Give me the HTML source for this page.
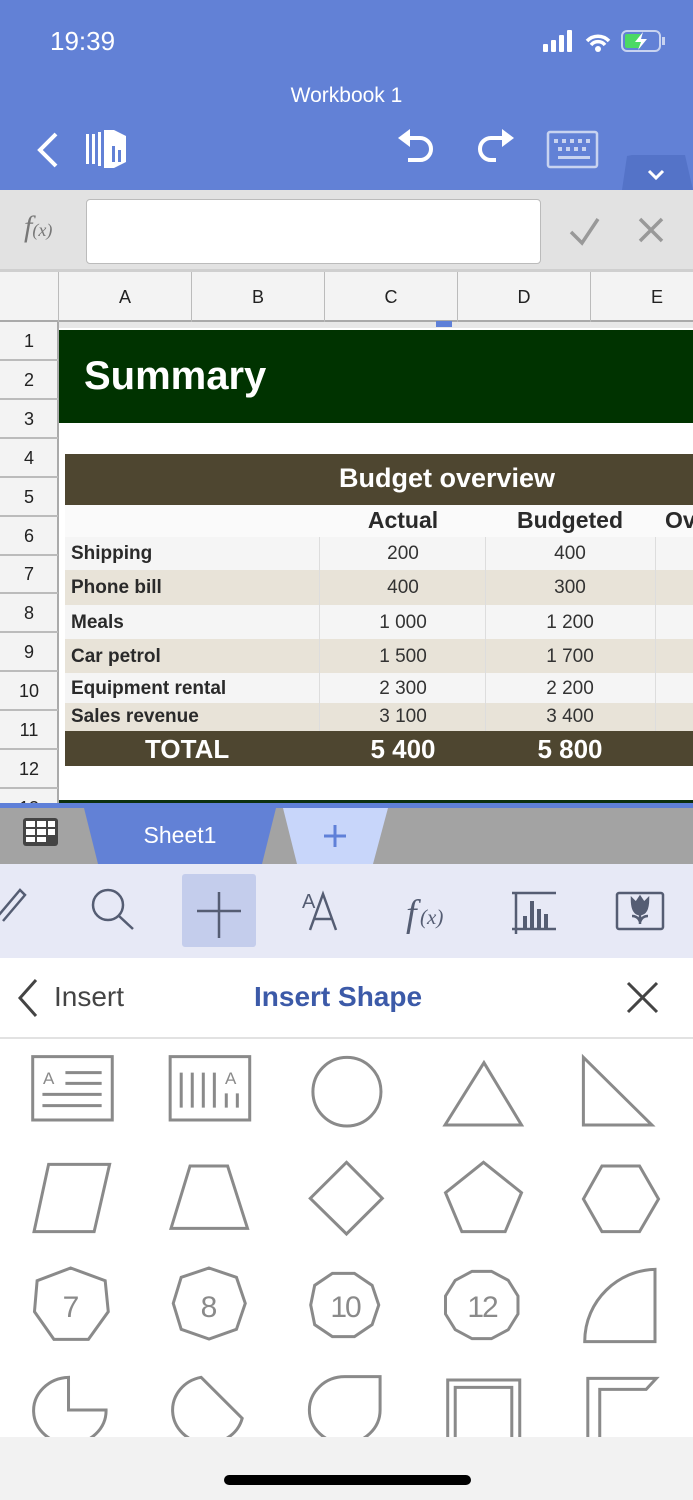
<!DOCTYPE html>
<html><head><meta charset="utf-8"><style>
*{margin:0;padding:0;box-sizing:border-box}
body{width:693px;height:1500px;position:relative;overflow:hidden;background:#fff;font-family:"Liberation Sans",sans-serif}
.a{position:absolute}
.rn{position:absolute;left:0;width:58px;text-align:center;font-size:18px;color:#222}
.ch{position:absolute;top:272px;height:50px;line-height:50px;text-align:center;font-size:18px;color:#222;border-right:1px solid #bbb}
.lb{position:absolute;left:71px;font-size:19px;font-weight:bold;color:#2a2a2a}
.n{position:absolute;width:120px;text-align:center;font-size:19px;color:#333}
</style></head><body>
<div class="a" style="left:0;top:0;width:693px;height:190px;background:#6281d6"></div>
<div class="a" style="left:50px;top:26px;font-size:26px;color:#fff">19:39</div>
<svg class="a" style="left:540px;top:28px" width="130" height="30">
<rect x="3" y="16" width="5" height="8" rx="1" fill="#fff"/><rect x="11" y="12" width="5" height="12" rx="1" fill="#fff"/><rect x="19" y="7" width="5" height="17" rx="1" fill="#fff"/><rect x="27" y="2" width="5" height="22" rx="1" fill="#fff"/>
<path d="M47 13 a15 15 0 0 1 22 0 M51 17 a9 9 0 0 1 14 0" stroke="#fff" stroke-width="3.5" fill="none"/><circle cx="58" cy="21" r="3" fill="#fff"/>
<rect x="82" y="3" width="38" height="20" rx="5" fill="none" stroke="#c8d3f0" stroke-width="2"/><rect x="85" y="6" width="16" height="14" rx="2" fill="#4cd964"/><rect x="122" y="9" width="3" height="8" fill="#c8d3f0"/>
<path d="M103 4 L95 14 L101 14 L98 22 L107 11 L101 11 Z" fill="#fff"/>
</svg>
<div class="a" style="left:0;width:693px;top:84px;text-align:center;font-size:21px;color:#fff">Workbook 1</div>
<svg class="a" style="left:0;top:120px" width="693" height="70">
<path d="M56 14 L40 30 L56 46" stroke="#fff" stroke-width="4" fill="none"/>
<g fill="#fff"><rect x="86" y="14" width="3" height="30"/><rect x="92" y="14" width="3" height="30"/><rect x="98" y="12" width="3" height="34"/><path d="M104 10 L114 10 L126 16 L126 42 L114 48 L104 48 Z"/></g>
<g fill="#6281d6"><rect x="112" y="26" width="3" height="16"/><rect x="118" y="30" width="3" height="12"/></g>
<path d="M406 18 L420 18 A11 11 0 0 1 420 40 L408 40" stroke="#fff" stroke-width="4" fill="none"/><path d="M398 18 L410 9 L410 27 Z" fill="#fff"/>
<path d="M505 18 L491 18 A11 11 0 0 0 491 40 L496 40" stroke="#fff" stroke-width="4" fill="none"/><path d="M514 18 L502 9 L502 27 Z" fill="#fff"/>
<rect x="548" y="12" width="49" height="35" rx="2" fill="none" stroke="#c8d3f0" stroke-width="2.5"/>
<g fill="#c8d3f0"><rect x="554" y="19" width="4" height="4"/><rect x="562" y="19" width="4" height="4"/><rect x="570" y="19" width="4" height="4"/><rect x="578" y="19" width="4" height="4"/><rect x="586" y="19" width="4" height="4"/><rect x="558" y="27" width="4" height="4"/><rect x="566" y="27" width="4" height="4"/><rect x="574" y="27" width="4" height="4"/><rect x="582" y="27" width="4" height="4"/><rect x="558" y="36" width="32" height="3"/></g>
<path d="M627 36 L632 35 L685 35 L693 70 L622 70 Z" fill="#5473c8"/>
<path d="M649 51 L656 58 L663 51" stroke="#fff" stroke-width="3" fill="none"/>
</svg>
<div class="a" style="left:0;top:190px;width:693px;height:82px;background:#e2e2e2;border-bottom:3px solid #cfcfcf"></div>
<div class="a" style="left:24px;top:210px;font-family:'Liberation Serif',serif;font-style:italic;font-size:30px;color:#777">f<span style="font-size:18px">(x)</span></div>
<div class="a" style="left:86px;top:199px;width:455px;height:65px;background:#fff;border:1px solid #bbb;border-radius:4px"></div>
<svg class="a" style="left:560px;top:210px" width="120" height="40"><path d="M11 22 L22 33 L38 9" stroke="#999" stroke-width="3.5" fill="none"/><path d="M80 9 L102 31 M102 9 L80 31" stroke="#999" stroke-width="3.5"/></svg>
<div class="a" style="left:0;top:272px;width:693px;height:50px;background:#f3f3f3;border-bottom:2px solid #aaa"></div>
<div class="ch" style="left:0;width:59px"></div>
<div class="ch" style="left:59px;width:133px">A</div>
<div class="ch" style="left:192px;width:133px">B</div>
<div class="ch" style="left:325px;width:133px">C</div>
<div class="ch" style="left:458px;width:133px">D</div>
<div class="ch" style="left:591px;width:133px">E</div>
<div class="a" style="left:0;top:322px;width:59px;height:486px;background:#f3f3f3;border-right:2px solid #aaa"></div>
<div class="a" style="left:59px;top:322px;width:634px;height:486px;background:#fff"></div>
<div class="a" style="left:59px;top:322px;width:634px;height:6px;background:#e8e8e8"></div>
<div class="a" style="left:436px;top:321px;width:16px;height:6px;background:#5f80d8"></div>
<div id="rows"></div>
<div class="a" style="left:59px;top:330px;width:634px;height:93px;background:#003300"></div>
<div class="a" style="left:84px;top:354px;font-size:40px;font-weight:bold;color:#fff">Summary</div>
<div class="a" style="left:65px;top:454px;width:628px;height:51px;background:#4e4630"></div>
<div class="a" style="left:65px;top:463px;width:764px;text-align:center;font-size:27px;font-weight:bold;color:#fff">Budget overview</div>
<div class="a" style="left:65px;top:505px;width:628px;height:32px;background:#fafafa"></div>
<div class="a" style="left:65px;top:537px;width:628px;height:33px;background:#f5f5f5"></div>
<div class="a" style="left:65px;top:570px;width:628px;height:35px;background:#e8e3d8"></div>
<div class="a" style="left:65px;top:605px;width:628px;height:34px;background:#f5f5f5"></div>
<div class="a" style="left:65px;top:639px;width:628px;height:34px;background:#e8e3d8"></div>
<div class="a" style="left:65px;top:673px;width:628px;height:30px;background:#f5f5f5"></div>
<div class="a" style="left:65px;top:703px;width:628px;height:28px;background:#e8e3d8"></div>
<div class="a" style="left:65px;top:731px;width:628px;height:35px;background:#4e4630"></div>
<div class="a" style="left:319px;top:537px;width:1px;height:194px;background:#ddd"></div>
<div class="a" style="left:485px;top:537px;width:1px;height:194px;background:#ddd"></div>
<div class="a" style="left:655px;top:537px;width:1px;height:194px;background:#ddd"></div>
<div class="n" style="left:343px;top:507px;font-size:23px;font-weight:bold;color:#2a2a2a">Actual</div>
<div class="n" style="left:510px;top:507px;font-size:23px;font-weight:bold;color:#2a2a2a">Budgeted</div>
<div class="a" style="left:665px;top:507px;font-size:23px;font-weight:bold;color:#2a2a2a">Ov</div>
<div class="lb" style="top:543px">Shipping</div><div class="n" style="left:343px;top:543px">200</div><div class="n" style="left:510px;top:543px">400</div>
<div class="lb" style="top:577px">Phone bill</div><div class="n" style="left:343px;top:577px">400</div><div class="n" style="left:510px;top:577px">300</div>
<div class="lb" style="top:612px">Meals</div><div class="n" style="left:343px;top:612px">1 000</div><div class="n" style="left:510px;top:612px">1 200</div>
<div class="lb" style="top:646px">Car petrol</div><div class="n" style="left:343px;top:646px">1 500</div><div class="n" style="left:510px;top:646px">1 700</div>
<div class="lb" style="top:678px">Equipment rental</div><div class="n" style="left:343px;top:678px">2 300</div><div class="n" style="left:510px;top:678px">2 200</div>
<div class="lb" style="top:706px">Sales revenue</div><div class="n" style="left:343px;top:706px">3 100</div><div class="n" style="left:510px;top:706px">3 400</div>
<div class="a" style="left:145px;top:734px;font-size:26px;font-weight:bold;color:#fff">TOTAL</div>
<div class="n" style="left:343px;top:734px;font-size:26px;font-weight:bold;color:#fff">5 400</div>
<div class="n" style="left:510px;top:734px;font-size:26px;font-weight:bold;color:#fff">5 800</div>
<div class="a" style="left:59px;top:800px;width:634px;height:3px;background:#0c3010"></div>
<div class="a" style="left:0;top:803px;width:693px;height:5px;background:#5f80d8"></div>
<div class="a" style="left:0;top:808px;width:693px;height:56px;background:#a3a3a3"></div>
<svg class="a" style="left:0;top:808px" width="693" height="56">
<rect x="23" y="10" width="35" height="28" rx="3" fill="#444"/>
<g fill="#fff"><rect x="26" y="13" width="9" height="6"/><rect x="37" y="13" width="9" height="6"/><rect x="48" y="13" width="7" height="6"/><rect x="26" y="21" width="9" height="6"/><rect x="37" y="21" width="9" height="6"/><rect x="48" y="21" width="7" height="6"/><rect x="26" y="29" width="9" height="5"/><rect x="37" y="29" width="9" height="5"/></g>
<path d="M84 0 L276 0 L262 56 L98 56 Z" fill="#6281d6"/>
<path d="M283 0 L388 0 L373 56 L297 56 Z" fill="#c8d6fa"/>
<path d="M335 17 V39 M324 28 H346" stroke="#5f80d8" stroke-width="3"/>
</svg>
<div class="a" style="left:84px;top:822px;width:192px;text-align:center;font-size:23px;color:#fff">Sheet1</div>
<div class="a" style="left:0;top:864px;width:693px;height:94px;background:#e7e9f6"></div>
<div class="a" style="left:182px;top:874px;width:74px;height:73px;background:#c4cdec;border-radius:3px"></div>
<svg class="a" style="left:0;top:864px" width="693" height="94" fill="none" stroke="#555d73" stroke-width="2.5">
<path d="M-2 52 L20 26 L25 31 L3 57"/>
<circle cx="108" cy="41" r="15"/><path d="M119 52 L133 65"/>
<path d="M219 28 V74 M197 47 H241"/>
<text x="302" y="44" font-size="20" fill="#555d73" stroke="none" font-family="Liberation Sans">A</text>
<path d="M310 66 L323 30 L336 66 M315 55 H331"/>
<text x="406" y="62" font-size="38" font-style="italic" fill="#555d73" stroke="none" font-family="Liberation Serif">f</text>
<text x="420" y="60" font-size="21" font-style="italic" fill="#555d73" stroke="none" font-family="Liberation Serif">(x)</text>
<path d="M516 28 V70 M512 29 H556 M512 65 H556"/>
<g fill="#555d73" stroke="none"><rect x="523" y="52" width="4" height="13"/><rect x="530" y="37" width="4" height="28"/><rect x="537" y="45" width="4" height="20"/><rect x="544" y="50" width="4" height="15"/></g>
<rect x="617" y="29" width="46" height="36" rx="2"/>
<path d="M640 60 V50 M632 52 Q638 52 640 58 M648 52 Q642 52 640 58"/>
<path d="M632 35 Q632 50 640 50 Q648 50 648 35 L644 39 L640 33 L636 39 Z" fill="#555d73"/>
</svg>
<div class="a" style="left:0;top:958px;width:693px;height:81px;background:#fff;border-bottom:2px solid #e2e2e2"></div>
<svg class="a" style="left:0;top:958px" width="693" height="80" fill="none" stroke="#444" stroke-width="3">
<path d="M36 22 L20 40 L36 58"/><path d="M628 25 L657 54 M657 25 L628 54"/></svg>
<div class="a" style="left:54px;top:981px;font-size:28px;color:#444">Insert</div>
<div class="a" style="left:254px;top:981px;font-size:28px;color:#3c5aa8;font-weight:bold">Insert Shape</div>
<svg class="a" style="left:0;top:1040px" width="693" height="397" viewBox="0 0 1568 1191" preserveAspectRatio="none">
<g fill="none" stroke="#8a8a8a" stroke-width="3" vector-effect="non-scaling-stroke">
<rect x="74" y="50" width="180" height="190" vector-effect="non-scaling-stroke"/>
<path d="M148 98 H230 M148 130 H230 M96 163 H230 M96 197 H230" vector-effect="non-scaling-stroke"/>
<rect x="385" y="50" width="180" height="190" vector-effect="non-scaling-stroke"/>
<path d="M410 98 V203 M435 98 V203 M460 98 V203 M485 98 V203 M512 160 V203 M537 160 V203" vector-effect="non-scaling-stroke"/>
<ellipse cx="785" cy="155" rx="77" ry="103" vector-effect="non-scaling-stroke"/>
<path d="M1095 68 L1007 255 L1180 255 Z" vector-effect="non-scaling-stroke"/>
<path d="M1320 52 L1320 255 L1475 255 Z" vector-effect="non-scaling-stroke"/>
<path d="M110 373 L248 373 L213 575 L77 575 Z" vector-effect="non-scaling-stroke"/>
<path d="M430 378 L515 378 L560 565 L387 565 Z" vector-effect="non-scaling-stroke"/>
<path d="M784 367 L865 475 L784 582 L702 475 Z" vector-effect="non-scaling-stroke"/>
<path d="M1094 367 L1180 458 L1143 575 L1045 575 L1008 458 Z" vector-effect="non-scaling-stroke"/>
<path d="M1362 378 L1447 378 L1490 477 L1447 575 L1362 575 L1320 477 Z" vector-effect="non-scaling-stroke"/>
<path d="M160 684 L238 722 L245 815 L200 898 L122 898 L78 815 L84 722 Z" vector-effect="non-scaling-stroke"/>
<path d="M473 684 L535 712 L555 790 L535 868 L473 897 L410 868 L392 790 L410 712 Z" vector-effect="non-scaling-stroke"/>
<path d="M857 795 L842 854 L802 890 L752 890 L712 854 L703 795 L712 736 L752 700 L802 700 L842 736 Z" vector-effect="non-scaling-stroke"/>
<path d="M1172 822 L1150 869 L1112 896 L1068 896 L1030 869 L1008 822 L1008 768 L1030 721 L1068 694 L1112 694 L1150 721 L1172 768 Z" vector-effect="non-scaling-stroke"/>
<path d="M1323 905 C1323 780 1400 690 1482 688 L1482 905 Z" vector-effect="non-scaling-stroke"/>
<path d="M155 1012 L155 1110 L240 1110 A82 100 0 1 1 155 1012 Z" vector-effect="non-scaling-stroke"/>
<path d="M455 1012 L548 1135 A80 100 0 1 1 455 1012 Z" vector-effect="non-scaling-stroke"/>
<path d="M780 1010 L860 1010 L860 1110 A80 100 0 1 1 780 1010 Z" vector-effect="non-scaling-stroke"/>
<rect x="1013" y="1020" width="163" height="200" vector-effect="non-scaling-stroke"/><rect x="1030" y="1042" width="128" height="180" vector-effect="non-scaling-stroke"/>
<path d="M1330 1200 L1330 1015 L1485 1015 L1462 1048 L1357 1048 L1357 1200" vector-effect="non-scaling-stroke"/>
</g>
</svg>
<svg class="a" style="left:0;top:1040px" width="693" height="397">
<g fill="#8a8a8a" font-family="Liberation Sans">
<text x="43" y="44" font-size="17">A</text>
<text x="225" y="44" font-size="17">A</text>
<text x="71" y="277" font-size="30" text-anchor="middle">7</text>
<text x="209" y="277" font-size="30" text-anchor="middle">8</text>
<text x="345" y="277" font-size="30" text-anchor="middle" letter-spacing="-2">10</text>
<text x="482" y="277" font-size="30" text-anchor="middle" letter-spacing="-2">12</text>
</g></svg>
<div class="a" style="left:0;top:1437px;width:693px;height:63px;background:#f2f2f2"></div>
<div class="a" style="left:224px;top:1475px;width:247px;height:10px;border-radius:5px;background:#000"></div>
<script>
var h='';for(var i=1;i<=13;i++){var t=322+(i-1)*38.9;h+='<div class="rn" style="top:'+t+'px;height:39px;line-height:39px;border-bottom:2px solid #bbb;'+(i==13?'height:20px;overflow:hidden;':'')+'">'+i+'</div>';}
document.getElementById('rows').innerHTML=h;
</script>
</body></html>
